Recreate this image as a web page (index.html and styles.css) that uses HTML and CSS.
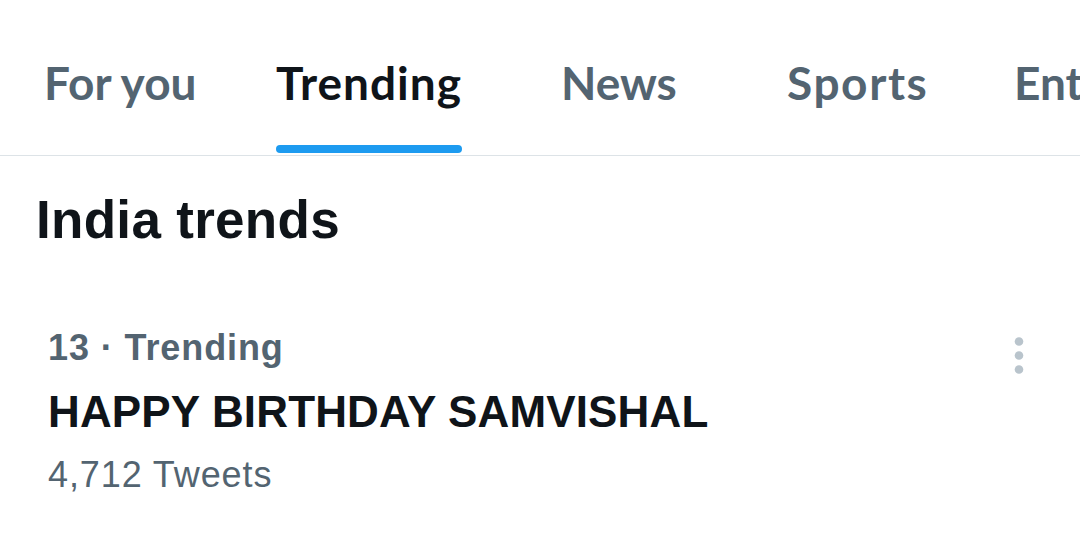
FILE: index.html
```html
<!DOCTYPE html>
<html lang="en">
<head>
<meta charset="utf-8">
<title>Explore</title>
<link rel="stylesheet" href="styles.css">
</head>
<body>
<nav class="tabs">
  <a class="tab tab-foryou"><span class="tab-inner"><span class="tab-label">For you</span><span class="tab-bar"></span></span></a>
  <a class="tab tab-trending is-active"><span class="tab-inner"><span class="tab-label">Trending</span><span class="tab-bar"></span></span></a>
  <a class="tab tab-news"><span class="tab-inner"><span class="tab-label">News</span><span class="tab-bar"></span></span></a>
  <a class="tab tab-sports"><span class="tab-inner"><span class="tab-label">Sports</span><span class="tab-bar"></span></span></a>
  <a class="tab tab-ent"><span class="tab-inner"><span class="tab-label">Entertainment</span><span class="tab-bar"></span></span></a>
</nav>
<main class="content">
  <h2 class="section-title">India trends</h2>
  <div class="trend">
    <div class="trend-text">
      <div class="trend-meta">13 · Trending</div>
      <div class="trend-name">HAPPY BIRTHDAY SAMVISHAL</div>
      <div class="trend-count">4,712 Tweets</div>
    </div>
    <button class="more" aria-label="More">
      <svg width="10" height="38" viewBox="0 0 10 38"><circle cx="5" cy="4.5" r="4.3" fill="#b9c4cc"/><circle cx="5" cy="18.5" r="4.3" fill="#b9c4cc"/><circle cx="5" cy="32.5" r="4.3" fill="#b9c4cc"/></svg>
    </button>
  </div>
</main>
</body>
</html>
```

FILE: styles.css
```css
* { box-sizing: border-box; }
html, body { margin: 0; padding: 0; background: #ffffff; }
body {
  width: 1080px;
  height: 534px;
  overflow: hidden;
  font-family: "Liberation Sans", Arial, sans-serif;
  color: #0f1419;
}

.tabs {
  display: flex;
  height: 156px;
  padding-left: 44px;
  border-bottom: 1px solid #dde3e7;
  overflow: hidden;
  white-space: nowrap;
}
.tab {
  flex: none;
  display: flex;
  text-decoration: none;
}
.tab-foryou { width: 232px; }
.tab-trending { width: 285px; }
.tab-news { width: 226px; }
.tab-sports { width: 227px; }
.tab-ent { width: 300px; }

.tab-inner {
  display: flex;
  flex-direction: column;
  padding-top: 55px;
}
.tab-label {
  font-family: "Lato", "Liberation Sans", sans-serif;
  font-weight: 700;
  font-size: 46px;
  line-height: 56px;
  color: #536471;
}
.tab-trending .tab-label { letter-spacing: 1px; }
.tab-sports .tab-label { letter-spacing: 1.6px; }
.tab-bar {
  height: 8px;
  margin-top: 34px;
  border-radius: 4px;
  background: transparent;
}
.is-active .tab-label { color: #0f1419; }
.is-active .tab-bar { background: #1d9bf0; }

.content { padding: 0; }
.section-title {
  margin: 32px 0 0;
  padding-left: 36px;
  font-size: 53px;
  line-height: 64px;
  font-weight: 700;
  letter-spacing: 0.3px;
  color: #0f1419;
}

.trend {
  display: flex;
  justify-content: space-between;
  align-items: flex-start;
  margin-top: 66px;
  padding: 0 56px 0 48px;
}
.trend-meta {
  font-size: 36px;
  line-height: 60px;
  font-weight: 700;
  letter-spacing: 0.9px;
  color: #536471;
}
.trend-name {
  font-size: 44px;
  line-height: 68px;
  font-weight: 700;
  letter-spacing: 0.15px;
  color: #0f1419;
}
.trend-count {
  font-size: 36px;
  line-height: 57px;
  letter-spacing: 0.9px;
  color: #536471;
}
.more {
  margin-top: 19px;
  padding: 0;
  border: 0;
  background: none;
  line-height: 0;
}
```
